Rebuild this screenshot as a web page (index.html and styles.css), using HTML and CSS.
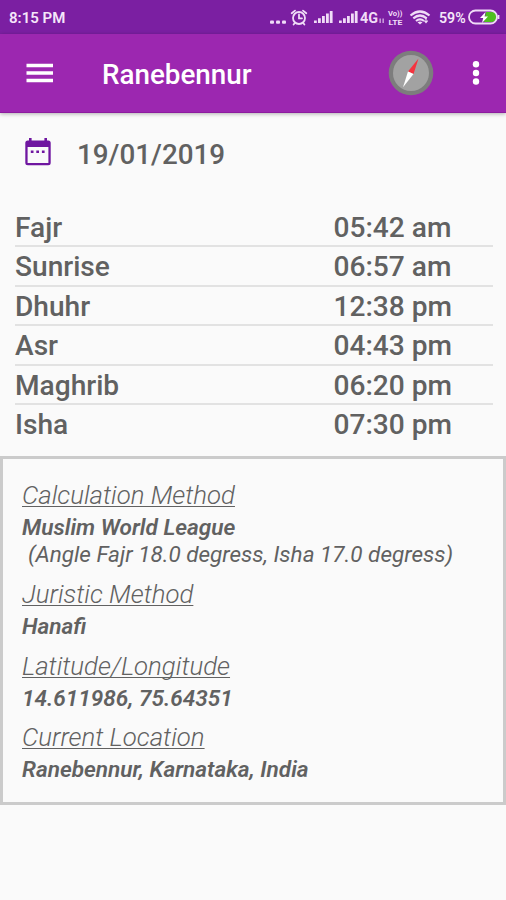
FILE: index.html
```html
<!DOCTYPE html>
<html lang="en">
<head>
    <meta charset="UTF-8">
    <meta name="viewport" content="width=device-width, initial-scale=1.0">
    <title>Prayer Times</title>
    <link rel="stylesheet" href="styles.css">
</head>
<body>

<div class="status-bar">
    <span class="clock">8:15 PM</span>
    <svg class="status-icons" width="163" height="34" viewBox="0 0 163 34">
        <!-- notifications -->
        <g fill="#f0dcf7">
            <rect x="1" y="20.5" width="4" height="3.2" rx="1"/>
            <rect x="7" y="20.5" width="4" height="3.2" rx="1"/>
            <rect x="13" y="20.5" width="4" height="3.2" rx="1"/>
        </g>
        <!-- alarm -->
        <g fill="none" stroke="#f0dcf7" stroke-width="1.8" stroke-linecap="round">
            <circle cx="30" cy="18" r="6"/>
            <path d="M30 14.5V18.3H33M22.7 13.2L26 10.6M37.3 13.2L34 10.6M25.8 23L24.6 24.5M34.2 23L35.4 24.5"/>
        </g>
        <!-- signal -->
        <g fill="#f0dcf7">
            <path d="M45 20.5h2.8V23H45zM49 18.3h2.8V23H49zM53 16h2.8v7H53zM57 13.5h2.8V23H57zM60.8 11h2.8v12h-2.8z"/>
            <path d="M70 20.5h2.8V23H70zM74 18.3h2.8V23H74zM78 16h2.8v7H78zM82 13.5h2.8V23H82zM85.8 11h2.8v12h-2.8z"/>
            <path d="M110.5 18.5h1.3V23h-1.3zM113.5 18.5h1.3V23h-1.3z" opacity=".8"/>
        </g>
        <text class="net" x="91" y="23" textLength="18" lengthAdjust="spacingAndGlyphs">4G</text>
        <text class="volte" x="119" y="15.8" textLength="14.5" lengthAdjust="spacingAndGlyphs">Vo))</text>
        <text class="volte" x="119.5" y="24.5" textLength="14" lengthAdjust="spacingAndGlyphs">LTE</text>
        <!-- wifi -->
        <g fill="none" stroke="#f0dcf7" stroke-width="2.2">
            <path d="M141.5 15.5Q151 7.5 160.5 15.5M144.3 18.3Q151 12.7 157.7 18.3M147 21Q151 17.8 155 21"/>
        </g>
        <path d="M148.5 22.3Q151 20.5 153.5 22.3L151 24.6z" fill="#f0dcf7"/>
        <path d="M157 17.5v5M155.3 20.7l1.7 2 1.7-2" fill="none" stroke="#f0dcf7" stroke-width="1.1"/>
    </svg>
    <span class="percent">59%</span>
    <svg class="battery" width="32" height="16" viewBox="0 0 32 16">
        <path d="M18 3H24a5 5 0 0 1 0 10H16z" fill="#4fbf1f"/>
        <rect x="1" y="1.500" width="28" height="13" rx="6.500" fill="none" stroke="#f0dcf7" stroke-width="1.8"/>
        <path d="M30.5 6v4" stroke="#f0dcf7" stroke-width="1.8"/>
        <path d="M17.5 3L12 9h3.2l-1.2 5 6-6.5h-3.4z" fill="#fff"/>
    </svg>
</div>

<div class="toolbar">
    <svg class="menu" width="28" height="20" viewBox="0 0 28 20">
        <path d="M.5 2.5h26.5M.5 10h26.5M.5 17.5h26.5" stroke="#fff" stroke-width="3.6"/>
    </svg>
    <h1>Ranebennur</h1>
    <svg class="compass" width="46" height="46" viewBox="0 0 46 46">
        <circle cx="23" cy="23" r="22.3" fill="#7d7d7d"/>
        <circle cx="23" cy="23" r="18" fill="#a2a2a2"/>
        <path d="M30.5 8.5L20 21.5 25.5 24z" fill="#f5333f"/>
        <path d="M15 37.2L20 21.5 25.5 24z" fill="#fff"/>
    </svg>
    <svg class="more" width="8" height="26" viewBox="0 0 8 26">
        <g fill="#fff">
            <circle cx="4" cy="4.3" r="3.2"/>
            <circle cx="4" cy="13" r="3.2"/>
            <circle cx="4" cy="21.5" r="3.2"/>
        </g>
    </svg>
</div>

<div class="date">
    <svg width="26" height="29" viewBox="0 0 26 29">
        <path d="M4 1h2.6v2.4h12.8V1H22v2.4h1.2a2.5 2.5 0 0 1 2.5 2.5v19.8a2.5 2.5 0 0 1-2.5 2.5H2.8a2.5 2.5 0 0 1-2.5-2.5V5.9a2.5 2.5 0 0 1 2.5-2.5H4zM2.6 10v15.9h20.8V10z" fill="#6f16a0" fill-rule="evenodd"/>
        <path d="M5.8 13.5h2.7v2.6H5.8zM11.3 13.5H14v2.6h-2.7zM16.9 13.5h2.7v2.6h-2.7z" fill="#6f16a0"/>
    </svg>
    <span>19/01/2019</span>
</div>

<div class="times">
    <div class="time-row"><span>Fajr</span><span class="time">05:42 am</span></div>
    <div class="time-row"><span>Sunrise</span><span class="time">06:57 am</span></div>
    <div class="time-row"><span>Dhuhr</span><span class="time">12:38 pm</span></div>
    <div class="time-row"><span>Asr</span><span class="time">04:43 pm</span></div>
    <div class="time-row"><span>Maghrib</span><span class="time">06:20 pm</span></div>
    <div class="time-row"><span>Isha</span><span class="time">07:30 pm</span></div>
</div>

<div class="info">
    <div class="label">Calculation Method</div>
    <div class="value">Muslim World League</div>
    <div class="note">(Angle Fajr 18.0 degress, Isha 17.0 degress)</div>
    <div class="label">Juristic Method</div>
    <div class="value">Hanafi</div>
    <div class="label">Latitude/Longitude</div>
    <div class="value">14.611986, 75.64351</div>
    <div class="label">Current Location</div>
    <div class="value">Ranebennur, Karnataka, India</div>
</div>

</body>
</html>
```
FILE: styles.css
```css
* {
    box-sizing: border-box;
}

body {
    margin: 0;
    min-height: 900px;
    background: #fafafa;
    color: #616161;
    font-family: Roboto, sans-serif;
}

.status-bar {
    display: flex;
    align-items: center;
    height: 34px;
    padding: 0 6px 0 9px;
    background: #7b1fa2;
    color: #f5e6fa;
    font-size: 15px;
    font-weight: 600;
    white-space: nowrap;
}

.clock {
    margin-right: auto;
    padding-top: 1px;
}

.status-icons {
    flex: none;
}

.net {
    fill: #f0dcf7;
    font-size: 14.5px;
    font-weight: 700;
}

.volte {
    fill: #f0dcf7;
    font-size: 7px;
    font-weight: 700;
}

.percent {
    width: 27px;
    margin-left: 7px;
    padding-top: 1px;
    font-size: 14.2px;
}

.battery {
    margin-left: 2px;
}

.toolbar {
    display: flex;
    align-items: center;
    height: 79px;
    padding: 0 26px;
    background: #9c27b0;
    border-bottom: 1px solid #8d1b9f;
    box-shadow: 0 1px 4px rgba(0, 0, 0, 0.3);
}

.toolbar h1 {
    margin: 3px auto 0 48px;
    color: #fff;
    font-size: 27.8px;
    font-weight: 500;
    line-height: 32px;
}

.more {
    margin-left: 38px;
}

.date {
    display: flex;
    align-items: center;
    height: 82px;
    padding-left: 25px;
    font-size: 27.8px;
    font-weight: 500;
}

.date svg {
    margin: 0 26px 6px 0;
}

.times {
    padding: 13px 13px 0 15px;
}

.time-row {
    display: flex;
    height: 39.4px;
    border-bottom: 2px solid #e2e2e2;
    font-size: 28.1px;
    font-weight: 500;
    line-height: 40px;
}

.time-row:last-child {
    border-bottom: none;
}

.time {
    width: 159.5px;
    margin-left: auto;
}

.info {
    height: 349px;
    margin-top: 12px;
    padding: 19px;
    border: 3px solid #cbcbcb;
    font-style: italic;
}

.label {
    height: 36px;
    font-size: 25.8px;
    font-weight: 300;
    line-height: 34px;
    text-decoration: underline;
    text-decoration-thickness: 1px;
    text-decoration-skip-ink: none;
    text-underline-offset: 2px;
}

.value {
    font-size: 22.6px;
    font-weight: 600;
    line-height: 27px;
}

.note {
    padding-left: 6px;
    font-size: 22.5px;
    font-weight: 400;
    line-height: 27px;
}

.value + .label,
.note + .label {
    margin-top: 8.7px;
}
```
